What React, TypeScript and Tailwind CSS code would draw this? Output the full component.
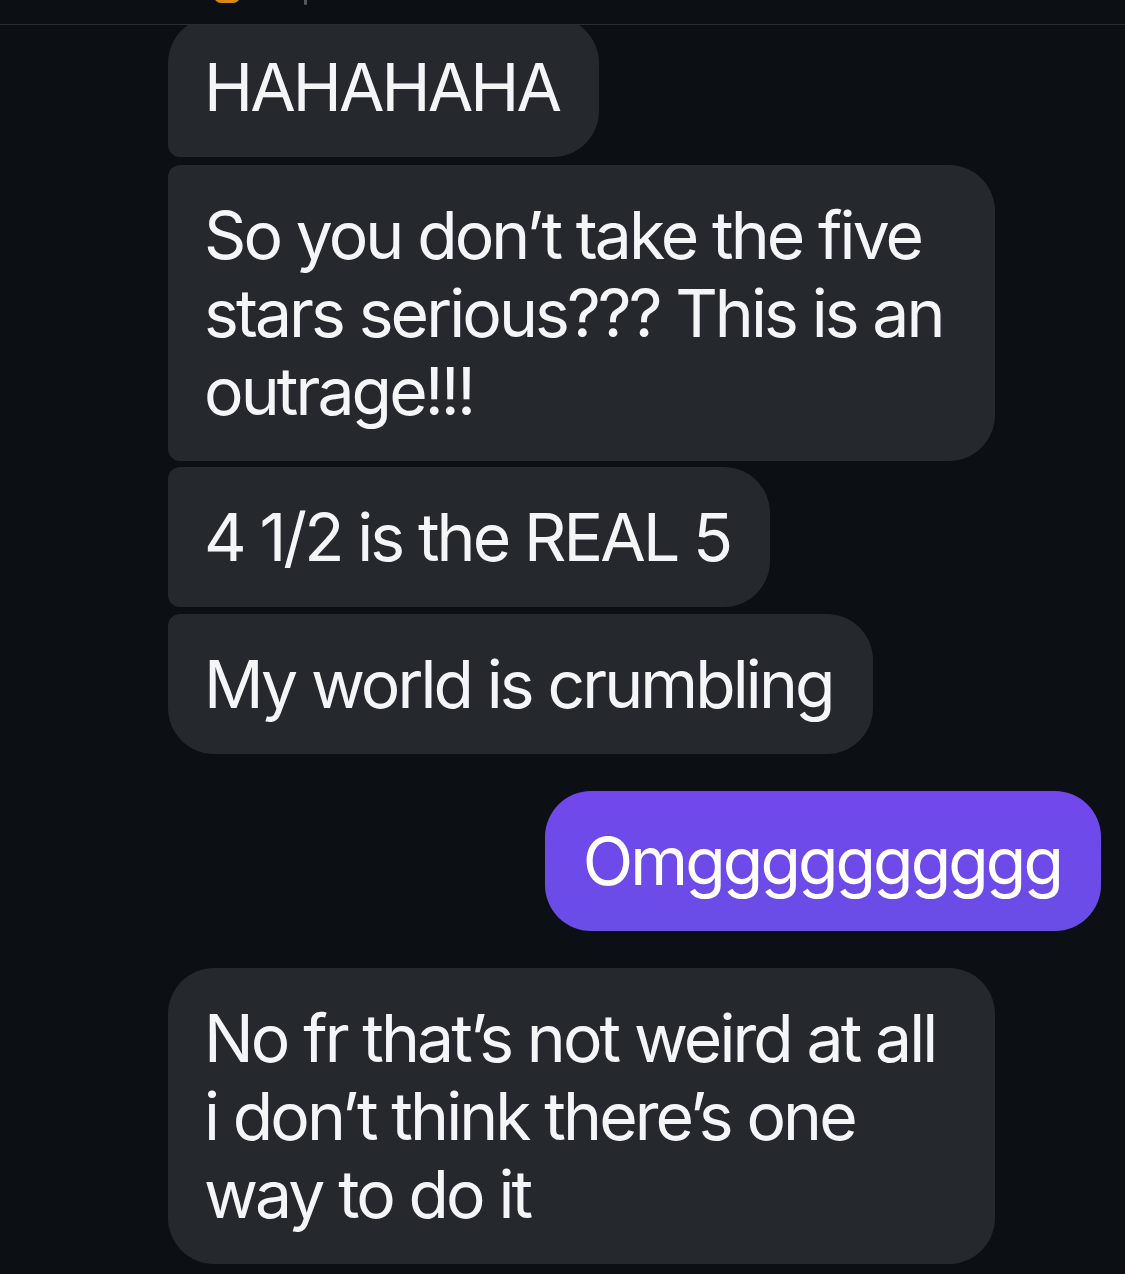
import React from "react";

type Msg = {
  lines: string[];
  mine?: boolean;
  corners: string;
  gap: string;
};

const messages: Msg[] = [
  { lines: ["HAHAHAHA"], corners: "rounded-tl-[46px] rounded-bl-[12px]", gap: "-mt-[8px]" },
  {
    lines: ["So you don’t take the five", "stars serious??? This is an", "outrage!!!"],
    corners: "rounded-tl-[12px] rounded-bl-[12px]",
    gap: "mt-[8px]",
  },
  { lines: ["4 1/2 is the REAL 5"], corners: "rounded-tl-[12px] rounded-bl-[12px]", gap: "mt-[6px]" },
  { lines: ["My world is crumbling"], corners: "rounded-tl-[12px] rounded-bl-[46px]", gap: "mt-[7px]" },
  { lines: ["Omgggggggggg"], mine: true, corners: "rounded-[46px]", gap: "mt-[37px]" },
  {
    lines: ["No fr that’s not weird at all", "i don’t think there’s one", "way to do it"],
    corners: "rounded-tl-[46px] rounded-bl-[46px]",
    gap: "mt-[37px]",
  },
];

const Bubble = ({ msg }: { msg: Msg }) => {
  const multi = msg.lines.length > 1;
  return (
    <div
      className={
        (msg.mine
          ? "self-end mr-[24px] pl-[38px] pr-[40px] bg-gradient-to-b from-[#7147ec] to-[#6a4de6] text-white "
          : "self-start ml-[168px] pl-[36px] pr-[40px] bg-[#25282d] text-[#f4f5f7] rounded-tr-[46px] rounded-br-[46px] ") +
        (multi ? "w-[827px] " : "w-fit ") +
        msg.corners +
        " " +
        msg.gap +
        " py-[31px] text-[66px] leading-[78px] tracking-[-2.9px]"
      }
    >
      {msg.lines.map((line, i) => (
        <div key={i} className="whitespace-nowrap">
          {line}
        </div>
      ))}
    </div>
  );
};

export default function App() {
  return (
    <div
      className="w-[1125px] h-[1274px] overflow-hidden bg-[#0c0f13] flex flex-col"
      style={{ fontFamily: "Inter, 'Noto Sans', sans-serif" }}
    >
      <div className="relative z-10 h-[25px] shrink-0 bg-[#0c0f13] border-b border-[#2a2d32]">
        <div className="absolute left-[214px] -top-[11px] w-[26px] h-[14px] rounded-full bg-[#d98a12]" />
        <div className="absolute left-[304px] -top-[4px] w-[3px] h-[9px] rounded-full bg-[#55585d]" />
      </div>
      <div className="flex flex-col">
        {messages.map((m, i) => (
          <Bubble key={i} msg={m} />
        ))}
      </div>
    </div>
  );
}
